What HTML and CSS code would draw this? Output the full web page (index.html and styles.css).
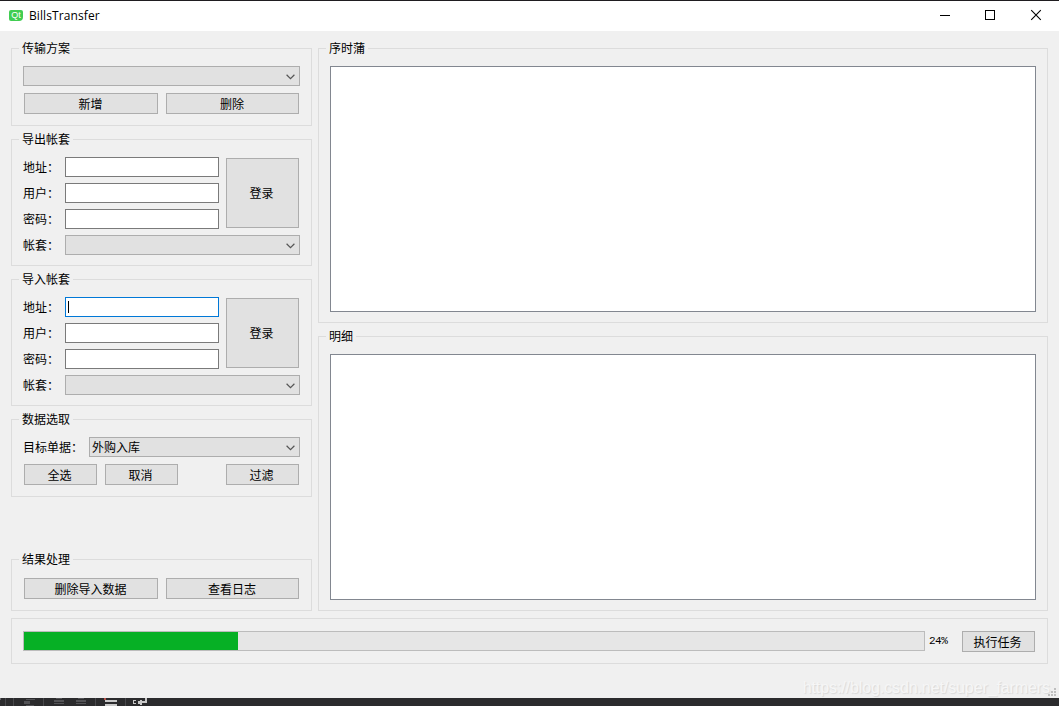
FILE: index.html
```html
<!DOCTYPE html>
<html lang="zh-CN">
<head>
    <meta charset="UTF-8">
    <meta name="viewport" content="width=device-width, initial-scale=1.0">
    <title>BillsTransfer</title>
    <link rel="stylesheet" href="styles.css">
</head>
<body>
    <!-- Shared icons -->
    <svg width="0" height="0" class="defs">
        <symbol id="chevron" viewBox="0 0 9 6">
            <path d="M0.6 0.8 L4.5 4.6 L8.4 0.8" fill="none" stroke="#555" stroke-width="1.2"/>
        </symbol>
    </svg>

    <header class="titlebar">
        <div class="app-icon">Qt</div>
        <h1 class="title">BillsTransfer</h1>
        <svg class="window-buttons" width="138" height="30" fill="none" stroke="#000" shape-rendering="crispEdges">
            <path d="M19 14.5h10"/>
            <rect x="64.5" y="9.5" width="9" height="9"/>
            <path d="M110.2 9.2l9.6 9.6M119.8 9.2l-9.6 9.6" shape-rendering="auto" stroke-width="1.1"/>
        </svg>
    </header>

    <main class="window">
        <div class="columns">
            <div class="sidebar">
                <section class="group">
                    <h2 class="group-title">传输方案</h2>
                    <div class="combo"><svg class="arrow"><use href="#chevron"/></svg></div>
                    <div class="button-row">
                        <button class="btn btn-wide">新增</button>
                        <button class="btn btn-fill">删除</button>
                    </div>
                </section>

                <section class="group group-login">
                    <h2 class="group-title">导出帐套</h2>
                    <div class="login-form">
                        <label>地址：</label><div class="field"></div>
                        <label>用户：</label><div class="field"></div>
                        <label>密码：</label><div class="field"></div>
                        <label>帐套：</label>
                        <div class="combo combo-span"><svg class="arrow"><use href="#chevron"/></svg></div>
                        <button class="btn btn-login">登录</button>
                    </div>
                </section>

                <section class="group group-login">
                    <h2 class="group-title">导入帐套</h2>
                    <div class="login-form">
                        <label>地址：</label><div class="field focused"><span class="caret"></span></div>
                        <label>用户：</label><div class="field"></div>
                        <label>密码：</label><div class="field"></div>
                        <label>帐套：</label>
                        <div class="combo combo-span"><svg class="arrow"><use href="#chevron"/></svg></div>
                        <button class="btn btn-login">登录</button>
                    </div>
                </section>

                <section class="group">
                    <h2 class="group-title">数据选取</h2>
                    <div class="select-row">
                        <label>目标单据：</label>
                        <div class="combo">外购入库<svg class="arrow"><use href="#chevron"/></svg></div>
                    </div>
                    <div class="button-row">
                        <button class="btn btn-small">全选</button>
                        <button class="btn btn-small">取消</button>
                        <button class="btn btn-small push-right">过滤</button>
                    </div>
                </section>

                <section class="group group-bottom">
                    <h2 class="group-title">结果处理</h2>
                    <div class="button-row">
                        <button class="btn btn-wide">删除导入数据</button>
                        <button class="btn btn-fill">查看日志</button>
                    </div>
                </section>
            </div>

            <div class="content">
                <section class="group group-list">
                    <h2 class="group-title">序时蒲</h2>
                    <div class="list"></div>
                </section>
                <section class="group group-list">
                    <h2 class="group-title">明细</h2>
                    <div class="list"></div>
                </section>
            </div>
        </div>

        <section class="group task-bar">
            <div class="progress"><div class="progress-fill" style="width: 23.8%"></div></div>
            <span class="percent">24%</span>
            <button class="btn btn-small">执行任务</button>
        </section>

        <div class="watermark">https://blog.csdn.net/super_farmers</div>
        <svg class="size-grip" width="8" height="8" fill="#bfbfbf">
            <path d="M6 0h2v2h-2zM3 3h2v2h-2zM6 3h2v2h-2zM0 6h2v2h-2zM3 6h2v2h-2zM6 6h2v2h-2z"/>
        </svg>
    </main>

    <!-- Toolbar of the editor behind the window -->
    <footer class="editor-strip">
        <svg width="160" height="8" shape-rendering="crispEdges">
            <path d="M0 0h1v2h-1z" fill="#66666a"/>
            <path d="M5 0h1v8h-1zM13 0h1v8h-1zM43 0h1v8h-1zM95 0h1v8h-1zM125 0h1v8h-1z" fill="#48484b"/>
            <path d="M26 1h9v1h-9zM24 3h6v3h-6zM26 7h8v1h-8zM54 2h10v2h-10zM54 5h10v1h-10zM76 2h10v2h-10zM76 5h10v1h-10zM56 0h6v1h-6zM78 0h6v1h-6z" fill="#535356"/>
            <path d="M104 0h2v2h-2z" fill="#b5524a"/>
            <path d="M105 2h12v2h-12zM105 6h12v2h-12z" fill="#c8c8c8"/>
            <path d="M133 2h3v1h-2v2h2v1h-3zM138 3h2v-1h2v1h3v-3h2v5h-5v2h-2v-1h-2z" fill="#c8c8c8"/>
        </svg>
    </footer>
</body>
</html>
```
FILE: styles.css
```css
* {
    box-sizing: border-box;
}

body {
    display: flex;
    flex-direction: column;
    height: 706px;
    margin: 0;
    overflow: hidden;
    background: #f0f0f0;
    color: #000;
    font-family: "Noto Sans CJK SC", sans-serif;
    font-size: 12px;
    line-height: 20px;
}

.defs {
    position: absolute;
}

/* Title bar */
.titlebar {
    display: flex;
    align-items: center;
    height: 31px;
    padding-left: 9px;
    border-top: 1px solid #1f1d20;
    background: #fff;
}

.app-icon {
    width: 14px;
    height: 11px;
    margin-top: -1px;
    border-radius: 2px;
    border-bottom-right-radius: 4px;
    background: #41cd52;
    color: #fff;
    font: 400 9px/11px "Liberation Sans", sans-serif;
    text-align: center;
}

.title {
    margin: 0 auto 0 6px;
    font: 400 12px/16px "Open Sans", sans-serif;
    letter-spacing: 0.1px;
}

/* Window body */
.window {
    position: relative;
    flex: 1;
    padding: 17px 11px 0;
}

.columns {
    display: flex;
    gap: 6px;
    height: 563px;
}

.sidebar,
.content {
    display: flex;
    flex-direction: column;
    gap: 13px;
}

.sidebar {
    width: 301px;
}

.content {
    flex: 1;
}

/* Group boxes */
.group {
    padding: 0 11px 11px;
    border: 1px solid #dcdcdc;
}

.group-title {
    width: fit-content;
    height: 20px;
    margin: -11px 0 8px -4px;
    padding: 0 3px;
    background: #f0f0f0;
    font-size: 12px;
    font-weight: 400;
    line-height: 20px;
}

.group-login {
    padding-bottom: 10px;
}

.group-bottom {
    margin-top: auto;
}

.group-list {
    display: flex;
    flex: 1;
    flex-direction: column;
    padding-bottom: 10px;
}

.list {
    flex: 1;
    border: 1px solid #828790;
    background: #fff;
}

/* Controls */
.combo {
    display: flex;
    flex: 1;
    align-items: center;
    justify-content: space-between;
    height: 20px;
    padding: 0 4px 0 2px;
    border: 1px solid #adadad;
    background: #e1e1e1;
}

.arrow {
    width: 9px;
    height: 6px;
    margin-top: 2px;
    margin-left: auto;
}

.btn {
    height: 21px;
    padding: 0 1px 0 0;
    border: 1px solid #adadad;
    background: #e1e1e1;
    color: #000;
    font-family: inherit;
    font-size: 12px;
    line-height: 19px;
}

.btn-wide {
    width: 134px;
}

.btn-fill {
    flex: 1;
}

.btn-small {
    width: 73px;
    padding-right: 2px;
}

.push-right {
    margin-left: auto;
}

.button-row {
    display: flex;
    gap: 8px;
    padding: 0 1px;
}

.combo + .button-row,
.select-row + .button-row {
    margin-top: 7px;
}

.group-bottom .button-row {
    margin-top: 9px;
}

.login-form {
    display: grid;
    grid-template-columns: 42px 154px 81px;
    grid-auto-rows: 20px;
    row-gap: 6px;
}

.login-form label {
    grid-column: 1;
}

.field {
    grid-column: 2;
    padding: 3px 2px;
    border: 1px solid #7a7a7a;
    background: #fff;
}

.focused {
    border-color: #0078d7;
}

.caret {
    display: block;
    width: 1px;
    height: 12px;
    background: #000;
}

.combo-span {
    grid-column: 2 / 4;
}

.btn-login {
    grid-column: 3;
    grid-row: 1 / 4;
    height: 70px;
    margin: 1px 1px 1px 7px;
    padding: 0 2px 1px 0;
}

.select-row {
    display: flex;
}

.select-row label {
    width: 66px;
    white-space: nowrap;
}

/* Progress */
.task-bar {
    display: flex;
    height: 46px;
    margin-top: 7px;
    padding: 12px 12px 0 11px;
}

.progress {
    width: 902px;
    height: 20px;
    border: 1px solid #bcbcbc;
    background: #e6e6e6;
}

.progress-fill {
    height: 100%;
    background: #06b025;
}

.percent {
    margin: 0 auto 0 4px;
    font-family: "Liberation Mono", monospace;
    font-size: 11px;
    letter-spacing: -0.5px;
}

/* Bottom right corner */
.size-grip {
    position: absolute;
    right: 3px;
    bottom: 2px;
}

.watermark {
    position: absolute;
    right: 9px;
    bottom: 0;
    color: #f6f6f6;
    font-family: "Liberation Sans", Arial, sans-serif;
    font-size: 16px;
    letter-spacing: -0.1px;
    text-shadow: 1px 1px 1px #d8d8d8;
}

.editor-strip {
    height: 8px;
    background: #2b2b2d;
}

.editor-strip svg {
    display: block;
}
```
